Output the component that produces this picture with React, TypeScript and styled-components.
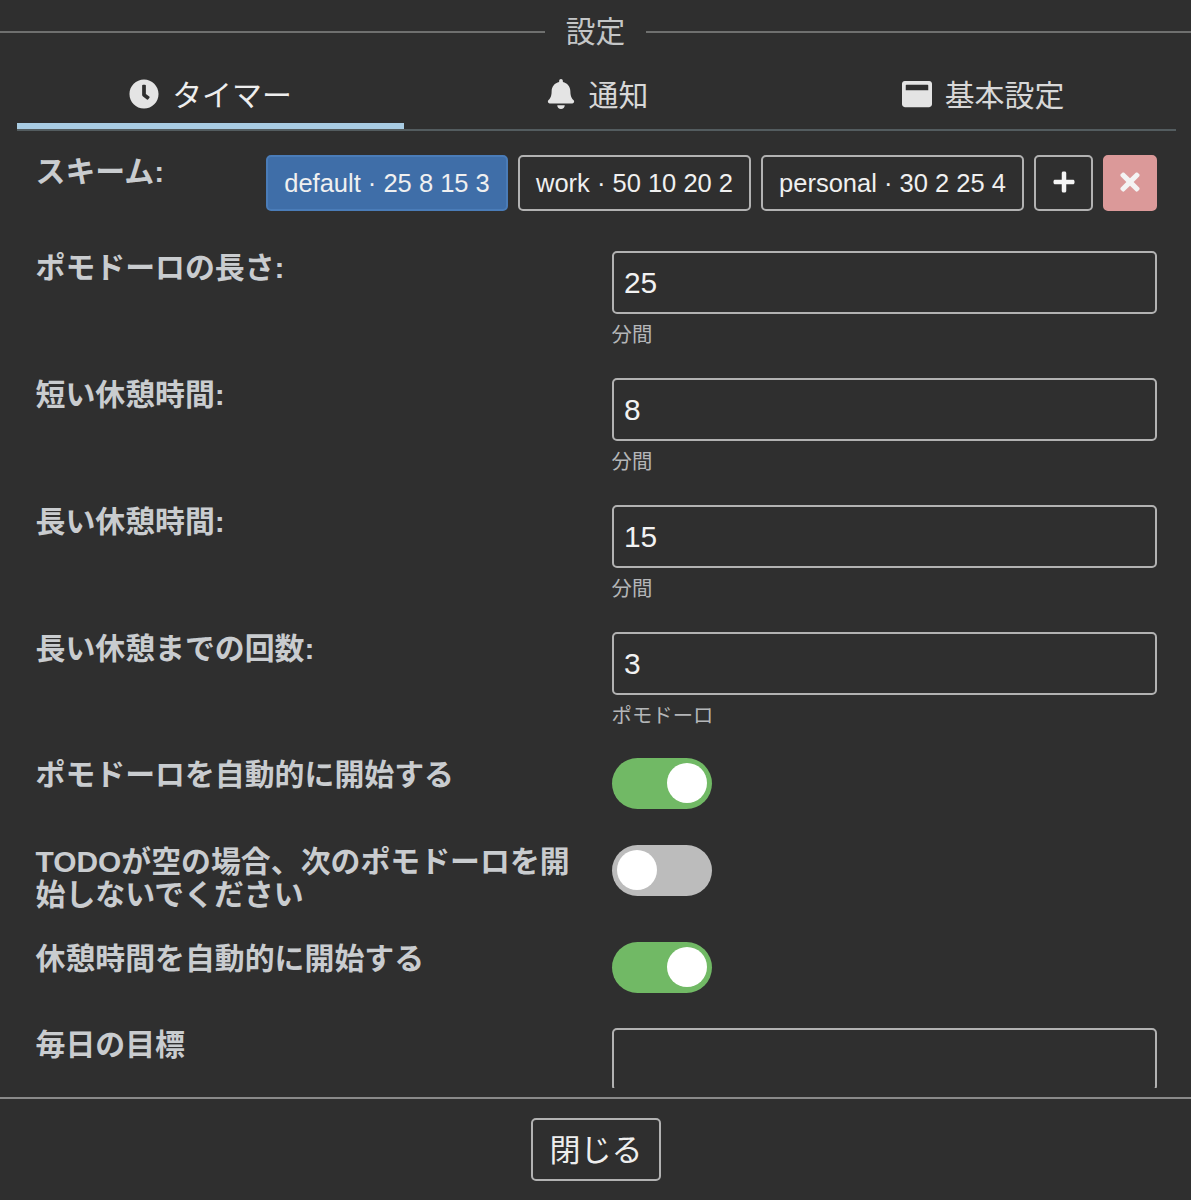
import * as React from 'react';
import styled, { createGlobalStyle } from 'styled-components';
import { FaBell, FaClock, FaPlus, FaTimes, FaWindowMaximize } from 'react-icons/fa';

const FONT = '"Liberation Sans", "Noto Sans CJK JP", sans-serif';

const GlobalStyle = createGlobalStyle`
  html, body {
    margin: 0;
    padding: 0;
    background-color: #2f2f2f;
  }
  * {
    box-sizing: border-box;
  }
`;

const tabs = [
  { name: 'タイマー', icon: <FaClock />, active: true },
  { name: '通知', icon: <FaBell />, active: false },
  { name: '基本設定', icon: <FaWindowMaximize />, active: false },
];

const schemes = [
  { name: 'default · 25 8 15 3', width: 242, active: true },
  { name: 'work · 50 10 20 2', width: 233, active: false },
  { name: 'personal · 30 2 25 4', width: 263, active: false },
];

const numbers = [
  { label: 'ポモドーロの長さ:', value: '25', unit: '分間' },
  { label: '短い休憩時間:', value: '8', unit: '分間' },
  { label: '長い休憩時間:', value: '15', unit: '分間' },
  { label: '長い休憩までの回数:', value: '3', unit: 'ポモドーロ' },
];

const switches = [
  { label: 'ポモドーロを自動的に開始する', on: true },
  { label: 'TODOが空の場合、次のポモドーロを開始しないでください', on: false },
  { label: '休憩時間を自動的に開始する', on: true },
];

const App: React.FC = () => {
  return (
    <Page>
      <GlobalStyle />
      <Title>
        <TitleText>設定</TitleText>
      </Title>
      <TabBar>
        {tabs.map((tab) => (
          <Tab key={tab.name} $active={tab.active}>
            <TabIcon>{tab.icon}</TabIcon>
            {tab.name}
          </Tab>
        ))}
      </TabBar>
      <Body>
        <SchemeRow>
          <SchemeLabel>スキーム:</SchemeLabel>
          <SchemeList>
            {schemes.map((scheme) => (
              <SchemeButton key={scheme.name} $active={scheme.active} $width={scheme.width}>
                {scheme.name}
              </SchemeButton>
            ))}
            <AddButton>
              <FaPlus />
            </AddButton>
            <RemoveButton>
              <FaTimes />
            </RemoveButton>
          </SchemeList>
        </SchemeRow>
        {numbers.map((row) => (
          <Row key={row.label}>
            <Label>{row.label}</Label>
            <Field>
              <NumberInput readOnly value={row.value} />
              <Hint>{row.unit}</Hint>
            </Field>
          </Row>
        ))}
        <SwitchGroup>
          {switches.map((row) => (
            <SwitchRow key={row.label}>
              <Label>{row.label}</Label>
              <Toggle $on={row.on}>
                <Knob />
              </Toggle>
            </SwitchRow>
          ))}
        </SwitchGroup>
        <Row>
          <Label>毎日の目標</Label>
          <Field>
            <NumberInput readOnly value="" />
          </Field>
        </Row>
      </Body>
      <Footer>
        <CloseButton>閉じる</CloseButton>
      </Footer>
    </Page>
  );
};
export default App;

const Page = styled.div`
  width: 1191px;
  height: 1200px;
  display: flex;
  flex-direction: column;
  overflow: hidden;
  background-color: #2f2f2f;
  font-family: ${FONT};
`;
const Title = styled.div`
  height: 64px;
  flex: none;
  display: flex;
  align-items: center;
  gap: 21px;
  font-size: 29.7px;
  color: #c4c6c7;
  &::before,
  &::after {
    content: '';
    flex: 1;
    height: 2px;
    background-color: #6f706f;
  }
`;
const TitleText = styled.span`
  padding-bottom: 5px;
`;
const TabBar = styled.div`
  flex: none;
  height: 67px;
  margin: 0 15px 0 17px;
  display: flex;
  border-bottom: 2px solid #535c5f;
`;
const Tab = styled.div<{ $active: boolean }>`
  flex: 1;
  height: 65px;
  padding-bottom: 2px;
  display: flex;
  align-items: center;
  justify-content: center;
  gap: 13px;
  font-size: 29.9px;
  color: ${(p) => (p.$active ? '#eeeeee' : '#d8d8d8')};
  border-bottom: 6px solid ${(p) => (p.$active ? '#a9cce3' : 'transparent')};
  &:first-child {
    flex: 0 0 387px;
  }
`;
const TabIcon = styled.span`
  display: flex;
  margin-top: 3px;
  font-size: 30px;
  color: #e4e4e4;
`;
const Body = styled.div`
  flex: 1;
  min-height: 0;
  overflow: hidden;
  margin-bottom: 9px;
  padding: 24px 34px 0 35.5px;
`;
const SchemeRow = styled.div`
  display: flex;
  margin-bottom: 40px;
`;
const Label = styled.div`
  width: 576px;
  flex: none;
  padding-right: 30px;
  margin-bottom: -5px;
  font-size: 29.9px;
  line-height: 33px;
  font-weight: 700;
  color: #c9cccf;
`;
const SchemeLabel = styled(Label)`
  width: 230.5px;
  padding-right: 0;
`;
const SchemeList = styled.div`
  display: flex;
  gap: 10px;
`;
const SchemeButton = styled.div<{ $active: boolean; $width: number }>`
  width: ${(p) => p.$width}px;
  height: 56px;
  display: flex;
  align-items: center;
  justify-content: center;
  font-size: 25.5px;
  color: #f0f0f0;
  white-space: nowrap;
  border-radius: 5px;
  border: 2px solid ${(p) => (p.$active ? '#4a7cb8' : '#b2b2b2')};
  background-color: ${(p) => (p.$active ? '#3f6ea8' : 'transparent')};
`;
const AddButton = styled.div`
  width: 59px;
  height: 56px;
  padding-bottom: 3px;
  display: flex;
  align-items: center;
  justify-content: center;
  font-size: 24px;
  color: #f4f4f4;
  border-radius: 5px;
  border: 2px solid #b2b2b2;
`;
const RemoveButton = styled(AddButton)`
  width: 54px;
  font-size: 28px;
  border-color: #db9999;
  background-color: #db9999;
`;
const Row = styled.div`
  display: flex;
  margin-bottom: 31px;
`;
const Field = styled.div`
  flex: 1;
`;
const NumberInput = styled.input`
  display: block;
  width: 100%;
  height: 63px;
  padding: 0 10.5px;
  font-family: ${FONT};
  font-size: 29.9px;
  color: #f2f2f2;
  background: transparent;
  border: 2px solid #b2b2b2;
  border-radius: 5px;
  outline: none;
`;
const Hint = styled.div`
  margin-top: 9px;
  font-size: 20.4px;
  line-height: 24px;
  color: #b4b6b8;
`;
const SwitchGroup = styled.div`
  margin: -1px 0 -1px;
`;
const SwitchRow = styled.div`
  display: flex;
  margin-bottom: 36px;
`;
const Toggle = styled.div<{ $on: boolean }>`
  width: 100px;
  height: 51px;
  padding: 5px 5px;
  display: flex;
  justify-content: ${(p) => (p.$on ? 'flex-end' : 'flex-start')};
  border-radius: 26px;
  background-color: ${(p) => (p.$on ? '#71b965' : '#bcbcbc')};
`;
const Knob = styled.span`
  width: 40px;
  height: 40px;
  border-radius: 50%;
  background-color: #ffffff;
`;
const Footer = styled.div`
  flex: none;
  height: 103px;
  display: flex;
  align-items: flex-start;
  justify-content: center;
  padding-top: 19px;
  border-top: 2px solid #8a8a8a;
`;
const CloseButton = styled.div`
  width: 130px;
  height: 63px;
  margin-left: 1px;
  padding-bottom: 4px;
  display: flex;
  align-items: center;
  justify-content: center;
  font-size: 31px;
  color: #eeeeee;
  border: 2px solid #b2b2b2;
  border-radius: 5px;
`;
